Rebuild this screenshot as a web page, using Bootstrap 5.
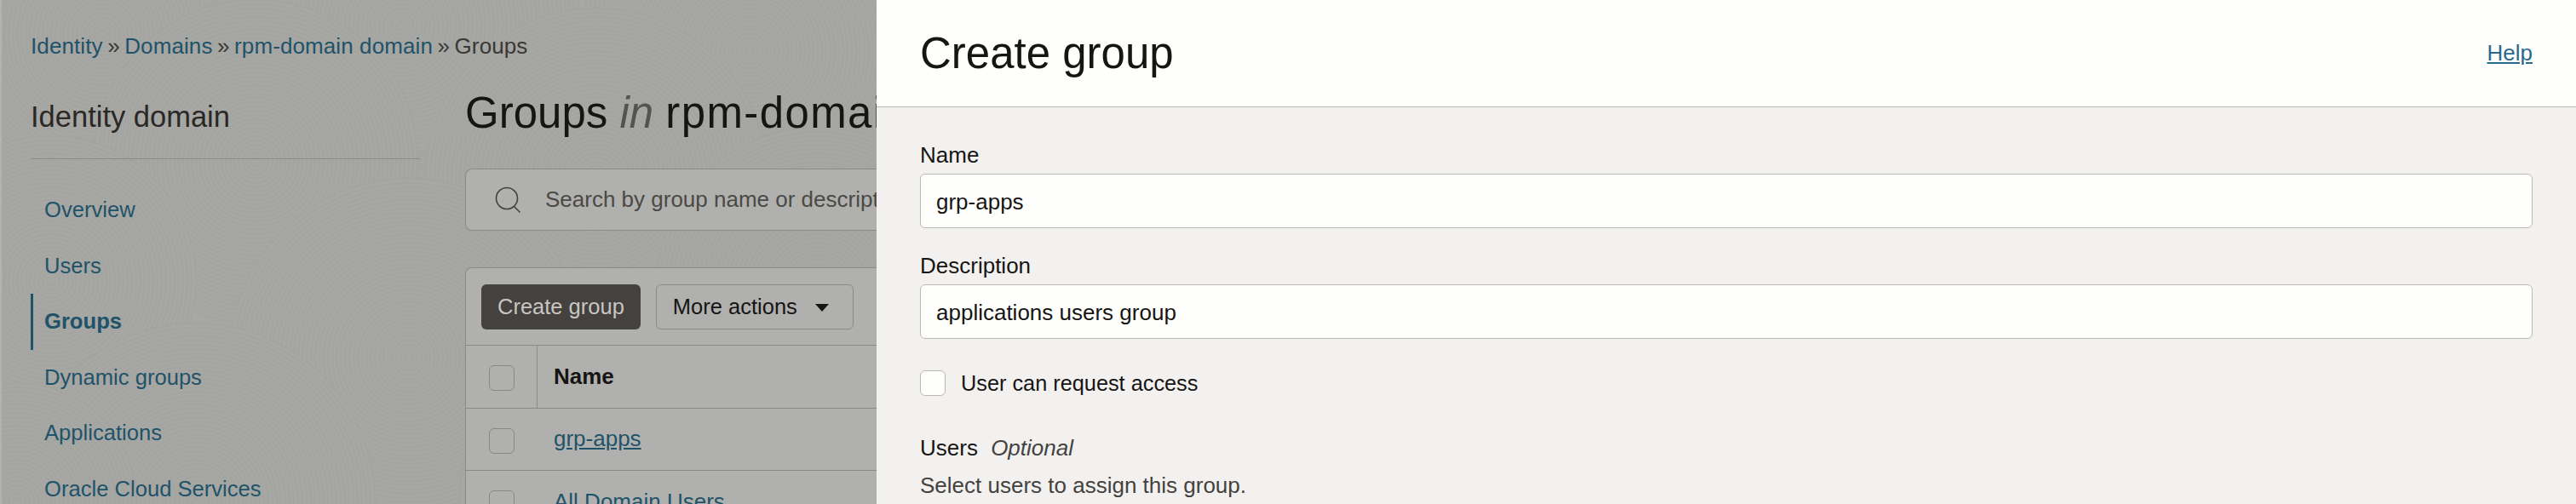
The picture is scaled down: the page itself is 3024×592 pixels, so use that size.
<!DOCTYPE html>
<html lang="en">
<head>
<meta charset="utf-8">
<title>Create group</title>
<link href="https://cdn.jsdelivr.net/npm/bootstrap@5.3.0/dist/css/bootstrap.min.css" rel="stylesheet">
<style>
html,body{height:100%;margin:0;overflow:hidden}
body{font-family:"Liberation Sans",Arial,sans-serif;font-size:26px;color:#161513;background:#a7a7a4}
.shell{height:592px;overflow:hidden;position:relative;background-color:#a7a7a4}
.texture{position:absolute;left:0;top:0;width:1029px;height:592px}
.backdrop{position:relative;width:1029px;height:592px;overflow:hidden;padding:0 0 0 34px;border-left:2px solid #b4b3b1}
.crumbs{height:100px;padding-top:37px;font-size:26px;line-height:34px;color:#3a3835;white-space:nowrap;letter-spacing:.1px}
.crumbs a,.sidelink{color:#1f5369;text-decoration:none}
.crumbs i{font-style:normal;margin:0 5.5px}
.cols{display:flex}
.sidecol{width:458px;flex:none;padding-top:8px}
.sidehead{font-size:34.5px;font-weight:400;line-height:44px;margin:0;padding:7px 0 27px;border-bottom:1px solid #8c8986;color:#2a2825}
.sidenav{list-style:none;padding:27px 0 0;margin:0}
.sidelink{display:block;height:65.5px;line-height:65.5px;padding-left:16px;font-size:25.6px}
.sidelink.cur{font-weight:700;border-left:3px solid #1f5369;padding-left:13px;color:#1f5369}
.maincol{width:600px;flex:none;margin-left:52px;overflow:hidden}
.mainhead{font-size:51px;font-weight:400;line-height:66px;margin:0;white-space:nowrap;color:#161513}
.mainhead em{color:#55534f}
.domaintitle{letter-spacing:1.4px}
.searchbox{margin-top:32px;height:73px;width:100%;background:#b0b0ae;border:1px solid #8c8986;border-radius:8px 0 0 8px;border-right:0;display:flex;align-items:center;padding-left:33px;color:#4b4945;white-space:nowrap}
.searchbox svg{margin-right:27px;flex:none}
.tablecard{margin-top:43px;background:#b0b0ae;border:1px solid #8c8986;border-right:0;border-radius:8px 0 0 0;height:300px}
.toolrow{height:91px;display:flex;align-items:center;gap:18px;padding-left:18px;border-bottom:1px solid #8c8986}
.btn-dark-oj,.btn-line-oj{height:53px;border-radius:6px;display:inline-flex;align-items:center;--bs-btn-font-size:25.5px}
.btn-dark-oj{background:#45413e;color:#c8c6c2;border:0;padding:0 19px}
.btn-line-oj{background:transparent;border:1px solid #8c8986;color:#161513;padding:0 28px 0 19px}
.caret-oj{display:inline-block;margin-left:21px;margin-top:3px;border-style:solid;border-width:9px 8.5px 0;border-color:#161513 transparent transparent}
.rowline{display:flex;height:73.5px;align-items:center;border-bottom:1px solid #8c8986}
.cellcheck{width:84px;height:100%;display:flex;align-items:center;padding-left:27px;border-right:1px solid #8f8d8a;flex:none}
.rowline.plain .cellcheck{border-right:0}
.rowline .fakebox{margin-top:4px}
.fakebox{width:30px;height:30px;border:1px solid #8a8885;border-radius:6px;display:block;flex:none}
.cellname{padding-left:19px}
.cellname a{color:#1f5369;text-decoration:underline}
.panelwrap{position:absolute;left:1029px;top:0;width:1995px;height:592px;background:#f2f1f0;z-index:2;overflow:hidden}
.panelhead{height:126px;background:#fefefc;border-bottom:1px solid #b9b6b3;display:flex;align-items:center;justify-content:space-between;padding:0 51px}
.panelhead h1{font-size:51px;font-weight:400;margin:0;line-height:64px;color:#161513}
.panelhead a{color:#29698e;font-size:26px;text-decoration:underline}
.panelbody{padding:38px 51px 0}
.flabel{font-size:26px;line-height:36px;margin:0 0 4px;display:block;color:#161513}
.finput{height:64px;border:1px solid #bcb8b4;border-radius:6px;background:#fefefc;padding:2px 18px 0;font-size:26px;color:#161513}
.finput:focus{background:#fefefc;border-color:#bcb8b4;box-shadow:none}
.fgroup{margin-bottom:26px}
.checkline{display:flex;align-items:center;gap:18px;margin:34px 0 0;line-height:36px;font-size:25.3px}
.checkline .fakebox{background:#fefefc;border:1px solid #bcb8b4}
.usershead{margin-top:40px;line-height:36px}
.usershead em{color:#44423e;margin-left:8px}
.usershelp{color:#44423e;line-height:36px;margin-top:8px}
</style>
</head>
<body>
<div class="shell">
  <svg class="texture" id="topo" viewBox="0 0 1029 592" aria-hidden="true"></svg>
  <div class="backdrop">
    <div class="crumbs"><a href="#">Identity</a><i>»</i><a href="#">Domains</a><i>»</i><a href="#">rpm-domain domain</a><i>»</i>Groups</div>
    <div class="cols">
      <div class="sidecol">
        <h2 class="sidehead">Identity domain</h2>
        <ul class="sidenav">
          <li><a class="sidelink" href="#">Overview</a></li>
          <li><a class="sidelink" href="#">Users</a></li>
          <li><a class="sidelink cur" href="#">Groups</a></li>
          <li><a class="sidelink" href="#">Dynamic groups</a></li>
          <li><a class="sidelink" href="#">Applications</a></li>
          <li><a class="sidelink" href="#">Oracle Cloud Services</a></li>
        </ul>
      </div>
      <div class="maincol">
        <h2 class="mainhead">Groups <em>in</em> <span class="domaintitle">rpm-domain domain</span></h2>
        <div class="searchbox">
          <svg width="33" height="32" viewBox="0 0 33 32" fill="none" stroke="#44423e" stroke-width="1.6"><circle cx="15" cy="14" r="12.5"/><path d="M23.5 23.5l7 7"/></svg>
          Search by group name or description
        </div>
        <div class="tablecard">
          <div class="toolrow">
            <button type="button" class="btn btn-dark-oj">Create group</button>
            <button type="button" class="btn btn-line-oj">More actions<span class="caret-oj"></span></button>
          </div>
          <div class="rowline">
            <div class="cellcheck"><span class="fakebox"></span></div>
            <div class="cellname fw-bold">Name</div>
          </div>
          <div class="rowline plain">
            <div class="cellcheck"><span class="fakebox"></span></div>
            <div class="cellname"><a href="#">grp-apps</a></div>
          </div>
          <div class="rowline plain">
            <div class="cellcheck"><span class="fakebox"></span></div>
            <div class="cellname"><a href="#">All Domain Users</a></div>
          </div>
        </div>
      </div>
    </div>
  </div>
  <div class="panelwrap">
    <div class="panelhead">
      <h1>Create group</h1>
      <a href="#">Help</a>
    </div>
    <div class="panelbody">
      <div class="fgroup">
        <label class="flabel" for="gname">Name</label>
        <input id="gname" class="form-control finput" value="grp-apps">
      </div>
      <div>
        <label class="flabel" for="gdesc">Description</label>
        <input id="gdesc" class="form-control finput" value="applications users group">
      </div>
      <div class="checkline"><span class="fakebox"></span><span>User can request access</span></div>
      <div class="usershead">Users <em>Optional</em></div>
      <div class="usershelp">Select users to assign this group.</div>
    </div>
  </div>
</div>
<script>
(function(){
  var centers=[[470,30,210],[120,40,190],[880,60,200],[300,190,190],[700,210,200],[60,330,170],[960,340,190],[480,420,210],[230,590,210],[760,590,220],[20,590,140]];
  var s='';
  centers.forEach(function(c){
    s+='<circle cx="'+c[0]+'" cy="'+c[1]+'" r="'+c[2]+'" fill="#a7a7a4"/>';
    for(var r=c[2];r>4;r-=5){
      s+='<circle cx="'+c[0]+'" cy="'+c[1]+'" r="'+r+'" fill="none" stroke="#8e8e8b" stroke-opacity=".09" stroke-width="2.5"/>';
    }
  });
  document.getElementById('topo').innerHTML=s;
})();
</script>
<script src="https://cdn.jsdelivr.net/npm/bootstrap@5.3.0/dist/js/bootstrap.bundle.min.js"></script>
</body>
</html>
